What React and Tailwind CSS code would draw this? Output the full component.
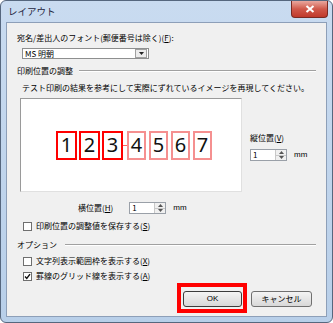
const JP = "font-['Noto_Sans_CJK_JP',sans-serif]";

function Spin() {
  return (
    <div className="flex h-[12px] w-[37px] border border-[#9aa0a8] bg-white">
      <span className="flex-1 pl-[2px] text-[8px] leading-[10px] text-black">1</span>
      <div className="flex w-[11px] flex-col border-l border-[#c8c8c8] bg-[#f0f0f0]">
        <div className="flex flex-1 items-center justify-center border-b border-[#c8c8c8]">
          <svg width="5" height="3" viewBox="0 0 5 3"><path d="M0 3 L2.5 0 L5 3Z" fill="#555" /></svg>
        </div>
        <div className="flex flex-1 items-center justify-center">
          <svg width="5" height="3" viewBox="0 0 5 3"><path d="M0 0 L2.5 3 L5 0Z" fill="#555" /></svg>
        </div>
      </div>
    </div>
  );
}

function Check({ checked }) {
  return (
    <div className="flex h-[9px] w-[9px] items-center justify-center border border-[#6f6f6f] bg-white">
      {checked && (
        <svg width="7" height="7" viewBox="0 0 7 7">
          <path d="M1 3.5 L2.8 5.5 L6 1.2" stroke="#111" strokeWidth="1.4" fill="none" />
        </svg>
      )}
    </div>
  );
}

export default function App() {
  const red = ["1", "2", "3"];
  const pink = ["4", "5", "6", "7"];
  return (
    <div className={`w-[333px] h-[323px] bg-white ${JP}`}>
      <div className="flex h-[323px] w-[333px] flex-col rounded-[6px] border border-[#56677e] bg-gradient-to-b from-[#c9dbf0] to-[#b8cfe9]">
        <div className="flex h-[21px] items-start justify-between">
          <span className="pl-[7px] pt-[4px] text-[9.5px] leading-[12px] text-[#1e1e3c]">レイアウト</span>
          <div className="mr-[4px] flex h-[17px] w-[37px] items-center justify-center rounded-b-[4px] border border-t-0 border-[#7a2a22] bg-gradient-to-b from-[#e8a79e] via-[#d0584a] to-[#c0392b]">
            <svg width="10" height="8" viewBox="0 0 10 8">
              <path d="M1.5 1 L8.5 7 M8.5 1 L1.5 7" stroke="#ffffff" strokeWidth="2" />
            </svg>
          </div>
        </div>
        <div className="mx-[5px] mb-[5px] flex flex-1 flex-col border border-[#8d9fb8] bg-[#f0f0f0] pl-[10px] pr-[10px] pt-[10px] text-[8px] leading-[10px] text-black">
          <div className="h-[10px]">宛名/差出人のフォント(郵便番号は除く)(<span className="underline">F</span>):</div>
          <div className="ml-[5px] mt-[5px] flex h-[11px] w-[127px] items-center border border-[#8e8f8f] bg-white">
            <span className="flex-1 pl-[2px]">MS 明朝</span>
            <div className="mr-[1px] flex h-[9px] w-[12px] items-center justify-center border border-[#a0a0a0] bg-[#ececec]">
              <svg width="5" height="3" viewBox="0 0 5 3"><path d="M0 0 L2.5 3 L5 0Z" fill="#222" /></svg>
            </div>
          </div>
          <div className="mt-[7px] flex h-[10px] items-center">
            <span>印刷位置の調整</span>
            <div className="ml-[6px] h-[2px] flex-1 border-t border-b border-t-[#a0a0a0] border-b-white" />
          </div>
          <div className="ml-[5px] mt-[7px] h-[10px]">テスト印刷の結果を参考にして実際にずれているイメージを再現してください。</div>
          <div className="mt-[5px] flex">
            <div className="ml-[3px] flex h-[94px] w-[222px] items-center border border-[#9a9a9a] border-r-[#e0e0e0] border-b-[#e0e0e0] bg-white pl-[35px] font-['Noto_Sans',sans-serif] text-[20px] leading-[24px] text-[#111]">
              {red.map((d, i) => (
                <div key={d} className={`flex h-[29px] w-[21px] items-center justify-center border-2 border-[#ff0000] ${i > 0 ? "ml-[2px]" : ""}`}>{d}</div>
              ))}
              <div className="h-[1px] w-[4px] bg-[#ff6060]" />
              {pink.map((d, i) => (
                <div key={d} className={`flex h-[29px] w-[19px] items-center justify-center border-2 border-[#f59090] ${i > 0 ? "ml-[3px]" : ""}`}>{d}</div>
              ))}
            </div>
            <div className="ml-[8px] flex flex-col pt-[35px]">
              <div className="h-[10px]">縦位置(<span className="underline">V</span>)</div>
              <div className="mt-[6px] flex items-center">
                <Spin />
                <span className="ml-[7px] font-['Liberation_Sans',sans-serif]">mm</span>
              </div>
            </div>
          </div>
          <div className="ml-[61px] mt-[10px] flex h-[12px] items-center">
            <span>横位置(<span className="underline">H</span>)</span>
            <div className="ml-[16px]"><Spin /></div>
            <span className="ml-[7px] font-['Liberation_Sans',sans-serif]">mm</span>
          </div>
          <div className="ml-[6px] mt-[7px] flex h-[10px] items-center">
            <Check />
            <span className="ml-[4px]">印刷位置の調整値を保存する(<span className="underline">S</span>)</span>
          </div>
          <div className="mt-[9px] flex h-[10px] items-center">
            <span>オプション</span>
            <div className="ml-[8px] h-[2px] flex-1 border-t border-b border-t-[#a0a0a0] border-b-white" />
          </div>
          <div className="ml-[6px] mt-[6px] flex h-[10px] items-center">
            <Check />
            <span className="ml-[4px]">文字列表示範囲枠を表示する(<span className="underline">X</span>)</span>
          </div>
          <div className="ml-[6px] mt-[5px] flex h-[10px] items-center">
            <Check checked />
            <span className="ml-[4px]">罫線のグリッド線を表示する(<span className="underline">A</span>)</span>
          </div>
          <div className="mr-[4px] mt-[2px] flex items-start justify-end">
            <div className="border-[4px] border-[#ff0000] pl-[2px] pr-[1px] pt-[4px] pb-[2px]">
              <div className="flex h-[16px] w-[59px] items-center justify-center rounded-[3px] border border-[#3c3c3c] bg-gradient-to-b from-[#f4f4f4] to-[#d8d8d8] font-['Liberation_Sans',sans-serif]">OK</div>
            </div>
            <div className="ml-[4px] mt-[8px] flex h-[16px] w-[61px] items-center justify-center rounded-[3px] border border-[#707070] bg-gradient-to-b from-[#f4f4f4] to-[#d8d8d8]">キャンセル</div>
          </div>
        </div>
      </div>
    </div>
  );
}
